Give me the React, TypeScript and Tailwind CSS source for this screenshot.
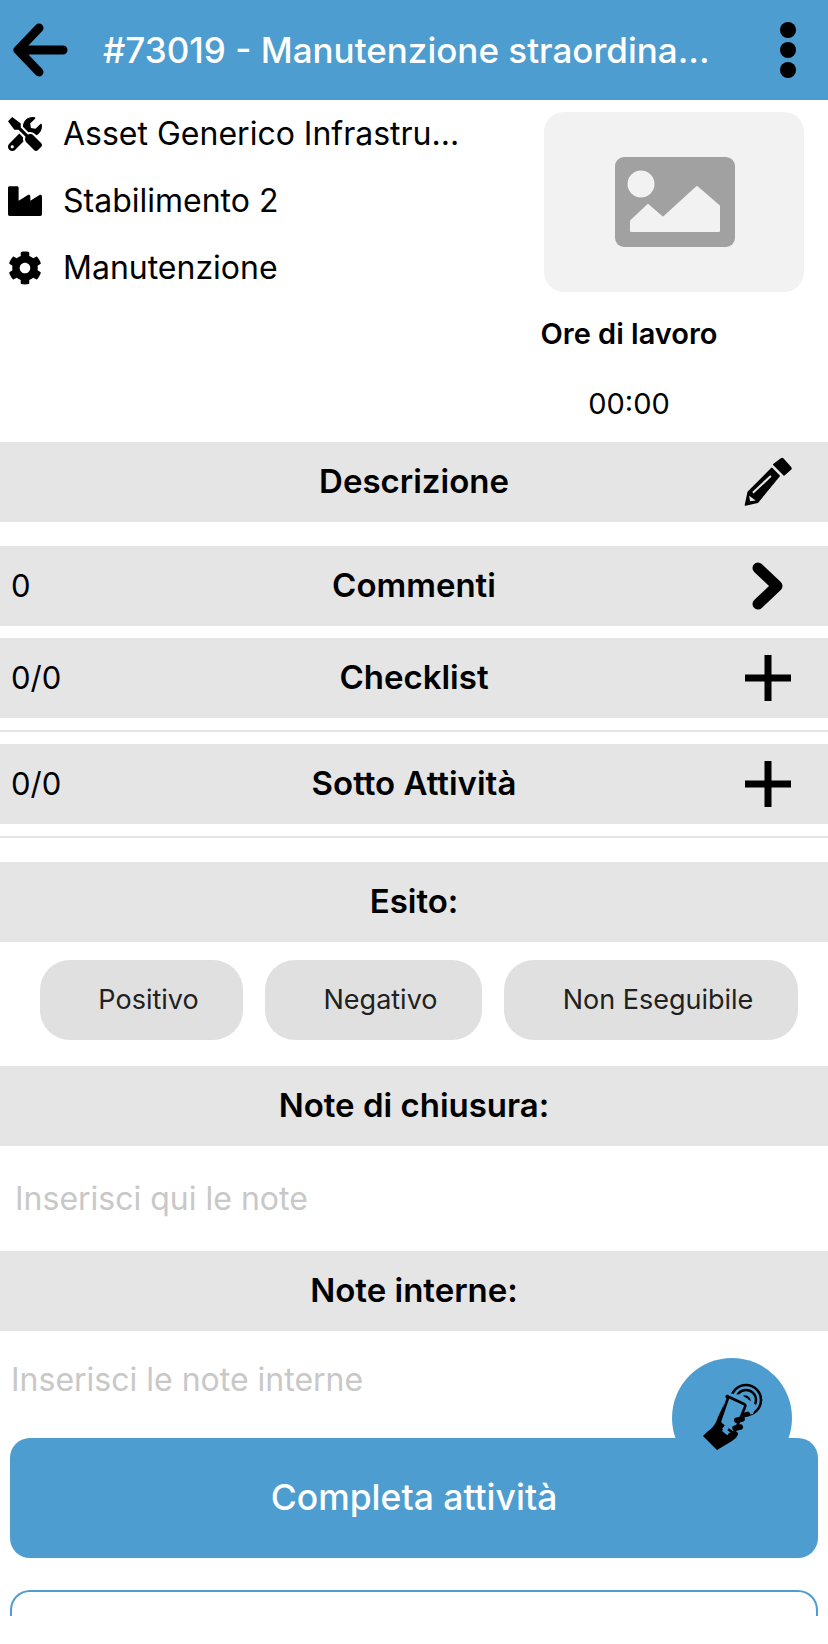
import React from "react";
import { FaTools, FaIndustry, FaCog } from "react-icons/fa";

function BackArrow() {
  return (
    <svg width="56" height="54" viewBox="0 0 56 54" fill="none" stroke="#000" strokeWidth="9" strokeLinecap="round" strokeLinejoin="round">
      <path d="M27 5 L6 27 L27 49 M6 27 H51" />
    </svg>
  );
}

function Pencil() {
  return (
    <svg className="shrink-0" width="66" height="57" viewBox="3 2 70 60">
      <path d="M44 13 L52 7 Q53 6 54 7 L62 16 Q63 17 62 18 L55 24 Z" fill="#000" stroke="#000" strokeWidth="1.5" strokeLinejoin="round" />
      <path d="M42 17 L50 25 L27 53 L14 56 L17 42 Z" fill="#000" stroke="#000" strokeWidth="1.5" strokeLinejoin="round" />
      <path d="M22 43 L41 25" stroke="#e5e5e5" strokeWidth="2.2" />
      <path d="M18 46 L25 51 L19 52 Z" fill="#e5e5e5" />
    </svg>
  );
}

function Chevron() {
  return (
    <svg width="32" height="48" viewBox="0 0 32 48" fill="none" stroke="#000" strokeWidth="11" strokeLinecap="round" strokeLinejoin="round">
      <path d="M6 6 L25 24 L6 42" />
    </svg>
  );
}

function Plus() {
  return (
    <svg width="46" height="46" viewBox="0 0 46 46" fill="#000">
      <rect x="0" y="19.5" width="46" height="7" />
      <rect x="19.5" y="0" width="7" height="46" />
    </svg>
  );
}

function PicturePlaceholder() {
  return (
    <svg className="ml-[1px]" width="120" height="90" viewBox="0 0 120 90">
      <rect width="120" height="90" rx="9" fill="#a1a1a1" />
      <circle cx="26" cy="27" r="13.5" fill="#f2f2f2" />
      <path d="M16 74 V64 L33 48 L48 61 L82 30 L104 49 V74 Z" fill="#f2f2f2" stroke="#f2f2f2" strokeWidth="2" strokeLinejoin="round" />
    </svg>
  );
}

function NfcHand() {
  return (
    <svg width="70" height="80" viewBox="0 0 70 80" fill="none">
      <circle cx="51" cy="25" r="15" stroke="#000" strokeWidth="2.6" />
      <circle cx="51" cy="25" r="10" stroke="#000" strokeWidth="2.4" />
      <circle cx="50" cy="26" r="4.5" stroke="#000" strokeWidth="2.4" />
      <path d="M42 41 L58 39 L61 30 L47 20 L32 18 Z" fill="#4d9dd0" />
      <path d="M33 23 Q31 22 32 21 L34 22 L49 29 Q51 30 50 32 L40 56 Q39 58 37 57 L26 49 Q25 48 25 46 Z" fill="#4d9dd0" stroke="#000" strokeWidth="2.6" strokeLinejoin="round" />
      <path d="M29 29 L25 47 L30 52 L27 56 L32 60 L38 58 L42 62 L37 66 L22 75 L8 61 L12 57 Q20 52 23 42 Z" fill="#000" />
      <rect x="28" y="51" width="5" height="5" fill="#4d9dd0" transform="rotate(35 30.5 53.5)" />
      <rect x="39" y="42" width="11" height="5.5" rx="2.7" fill="#000" transform="rotate(-12 44 45)" />
      <rect x="37" y="50" width="11" height="5.5" rx="2.7" fill="#000" transform="rotate(-12 42 52)" />
      <rect x="33" y="57" width="10" height="5" rx="2.5" fill="#000" transform="rotate(-12 38 59)" />
      <rect x="47" y="37" width="8" height="5" rx="2.5" fill="#000" transform="rotate(-15 51 39)" />
    </svg>
  );
}

function SectionBar({ title, count, icon, className = "" }: { title: string; count?: string; icon?: React.ReactNode; className?: string }) {
  return (
    <div className={`relative flex h-[80px] items-center justify-center bg-[#e5e5e5] ${className}`}>
      {count && <span className="absolute left-[11px] text-[31px] text-black">{count}</span>}
      <span className="text-[33px] font-semibold text-black">{title}</span>
      {icon && <span className="absolute right-[36px] flex w-[48px] justify-center">{icon}</span>}
    </div>
  );
}

export default function App() {
  const rows = [
    { icon: <FaTools size={34} />, text: "Asset Generico Infrastru..." },
    { icon: <FaIndustry size={34} />, text: "Stabilimento 2" },
    { icon: <FaCog size={34} />, text: "Manutenzione" },
  ];

  return (
    <div className="relative h-[1644px] w-[828px] overflow-hidden bg-white font-['Inter',sans-serif]">
      {/* header */}
      <div className="flex h-[100px] items-center bg-[#4d9dd0]">
        <div className="ml-[12px] w-[91px]"><BackArrow /></div>
        <span className="w-[677px] truncate text-[35px] font-medium text-white">#73019 - Manutenzione straordina...</span>
        <div className="flex flex-col gap-[4px]">
          <span className="h-[16px] w-[16px] rounded-full bg-black" />
          <span className="h-[16px] w-[16px] rounded-full bg-black" />
          <span className="h-[16px] w-[16px] rounded-full bg-black" />
        </div>
      </div>

      {/* info */}
      <div className="flex h-[342px]">
        <div className="flex w-[510px] flex-col gap-[27px] pl-[8px] pt-[14px]">
          {rows.map((row) => (
            <div key={row.text} className="flex h-[40px] items-center">
              <span className="w-[55px] shrink-0">{row.icon}</span>
              <span className="text-[32px] text-black">{row.text}</span>
            </div>
          ))}
        </div>
        <div className="flex flex-col">
          <div className="ml-[34px] mt-[12px] flex h-[180px] w-[260px] items-center justify-center rounded-[20px] bg-[#f2f2f2]">
            <PicturePlaceholder />
          </div>
          <div className="mt-[20px] w-[238px] text-center text-[29px] font-semibold text-black">Ore di lavoro</div>
          <div className="mt-[26px] w-[238px] text-center text-[29px] text-black">00:00</div>
        </div>
      </div>

      <SectionBar title="Descrizione" icon={<Pencil />} />
      <SectionBar title="Commenti" count="0" icon={<Chevron />} className="mt-[24px]" />
      <SectionBar title="Checklist" count="0/0" icon={<Plus />} className="mt-[12px]" />
      <div className="mt-[12px] h-[2px] bg-[#e5e5e5]" />
      <SectionBar title="Sotto Attività" count="0/0" icon={<Plus />} className="mt-[12px]" />
      <div className="mt-[12px] h-[2px] bg-[#e5e5e5]" />
      <SectionBar title="Esito:" className="mt-[24px]" />

      {/* esito buttons */}
      <div className="mt-[18px] flex h-[80px] gap-[22px] pl-[40px]">
        <div className="flex w-[203px] items-center justify-center rounded-[30px] bg-[#e0e0e0] pl-[14px] text-[27px] text-[#212121]">Positivo</div>
        <div className="flex w-[217px] items-center justify-center rounded-[30px] bg-[#e0e0e0] pl-[14px] text-[27px] text-[#212121]">Negativo</div>
        <div className="flex w-[294px] items-center justify-center rounded-[30px] bg-[#e0e0e0] pl-[14px] text-[27px] text-[#212121]">Non Eseguibile</div>
      </div>

      <SectionBar title="Note di chiusura:" className="mt-[26px]" />
      <div className="flex h-[105px] items-center pl-[15px] text-[32px] text-[#c8c8c8]">Inserisci qui le note</div>
      <SectionBar title="Note interne:" />
      <div className="flex h-[98px] items-center pl-[11px] text-[32px] text-[#c8c8c8]">Inserisci le note interne</div>

      {/* actions */}
      <div className="relative z-10 mx-[10px] mt-[9px] flex h-[120px] items-center justify-center rounded-[20px] bg-[#4d9dd0] text-[35.5px] font-medium text-white">Completa attività</div>
      <div className="mx-[10px] mt-[32px] h-[26px] rounded-t-[20px] border-x-2 border-t-2 border-[#4d9dd0]" />
      <div className="mt-[22px] text-center text-[32px] leading-[40px] font-medium text-black">Salva attività</div>

      {/* nfc fab */}
      <div className="absolute left-[672px] top-[1358px] h-[120px] w-[120px] rounded-full bg-[#4d9dd0]" />
      <div className="absolute left-[695px] top-[1375px] z-20"><NfcHand /></div>
    </div>
  );
}
